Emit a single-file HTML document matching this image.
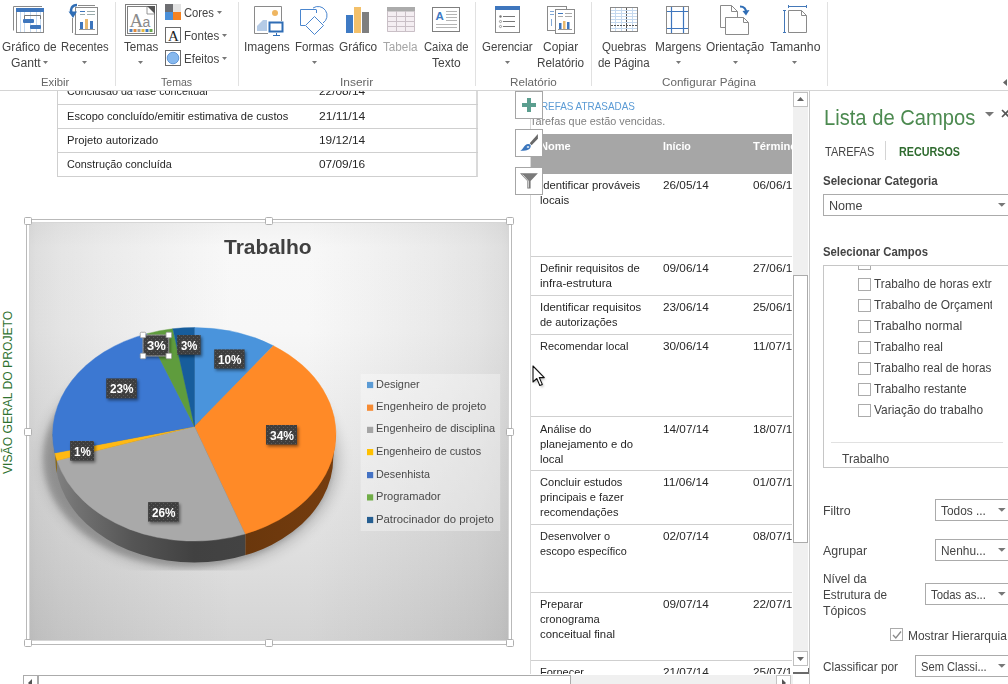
<!DOCTYPE html>
<html lang="pt-BR"><head><meta charset="utf-8"><title>Project - Lista de Campos</title><style>
html,body{margin:0;padding:0;}
body{width:1008px;height:684px;overflow:hidden;background:#fff;position:relative;font-family:"Liberation Sans",sans-serif;color:#444;}
.a{position:absolute;}
.t{position:absolute;white-space:nowrap;transform-origin:0 0;}
svg{position:absolute;overflow:visible;}
.clip{position:absolute;overflow:hidden;}
</style></head><body><div class="a" style="left:57px;top:60px;width:421px;height:117px;border:1px solid #cfcfcf;border-right:2px solid #dadada;box-sizing:border-box"></div><div class="a" style="left:57px;top:104px;width:421px;height:1px;background:#cfcfcf"></div><div class="a" style="left:57px;top:128px;width:421px;height:1px;background:#cfcfcf"></div><div class="a" style="left:57px;top:152px;width:421px;height:1px;background:#cfcfcf"></div><span class="t" style="left:67.40px;top:86.00px;font-size:11px;line-height:11px;color:#262626;transform:scaleX(0.9790);">Conclusão da fase conceitual</span><span class="t" style="left:319.40px;top:86.00px;font-size:11px;line-height:11px;color:#262626;transform:scaleX(1.0787);">22/08/14</span><span class="t" style="left:67.40px;top:111.00px;font-size:11px;line-height:11px;color:#262626;transform:scaleX(1.0077);">Escopo concluído/emitir estimativa de custos</span><span class="t" style="left:319.40px;top:111.00px;font-size:11px;line-height:11px;color:#262626;transform:scaleX(1.0996);">21/11/14</span><span class="t" style="left:67.40px;top:135.00px;font-size:11px;line-height:11px;color:#262626;transform:scaleX(1.0215);">Projeto autorizado</span><span class="t" style="left:319.40px;top:135.00px;font-size:11px;line-height:11px;color:#262626;transform:scaleX(1.0787);">19/12/14</span><span class="t" style="left:67.40px;top:159.00px;font-size:11px;line-height:11px;color:#262626;transform:scaleX(0.9840);">Construção concluída</span><span class="t" style="left:319.40px;top:159.00px;font-size:11px;line-height:11px;color:#262626;transform:scaleX(1.0787);">07/09/16</span><div class="a" style="left:0;top:311px;width:18px;height:163px;"><span class="t" style="left:2.3px;top:162.6px;font-size:12px;line-height:12px;color:#2f7230;transform:rotate(-90deg) scaleX(1.0113);transform-origin:0 0">VISÃO GERAL DO PROJETO</span></div><div class="a" style="left:23px;top:675px;width:770px;height:12px;background:#f0f0f0"></div><div class="a" style="left:23px;top:675px;width:15px;height:12px;background:#fff;border:1px solid #ababab;box-sizing:border-box"></div><div class="a" style="left:38px;top:675px;width:533px;height:12px;background:#fff;border:1px solid #ababab;box-sizing:border-box"></div><div class="a" style="left:776px;top:675px;width:15px;height:12px;background:#fff;border:1px solid #c4c4c4;box-sizing:border-box"></div><svg style="left:28px;top:679px" width="4" height="8" viewBox="0 0 4 8"><path d="M4 0L0 4L4 8Z" fill="#555"/></svg><svg style="left:782px;top:679px" width="4" height="8" viewBox="0 0 4 8"><path d="M0 0L4 4L0 8Z" fill="#555"/></svg><div class="a" style="left:26px;top:219px;width:486px;height:426px;border:1px solid #b9b9b9;box-sizing:border-box;background:#fff"></div><div class="a" style="left:29px;top:222px;width:480px;height:419px;border:1px solid #d6d6d6;box-sizing:border-box;background-origin:border-box;background-color:#f8f8f8;background-image:linear-gradient(90deg,#e0e0e0 0%,#e5e5e5 1.500%,#ebebeb 6.500%,#f1f1f1 15%,#f8f8f8 28%,#ffffff 42%,#ffffff 58%,#f8f8f8 72%,#f1f1f1 85%,#ebebeb 93.500%,#e5e5e5 98.500%,#e0e0e0 100%),linear-gradient(180deg,#f8f8f8 0%,#ffffff 6%,#fefefe 26%,#f1f1f1 54%,#e3e3e3 83%,#dadada 100%);background-blend-mode:multiply,multiply"></div><svg style="left:0;top:0" width="530" height="650" viewBox="0 0 530 650"><defs><filter id="bl" x="-20%" y="-20%" width="140%" height="140%"><feGaussianBlur stdDeviation="7"/></filter><filter id="bl2" x="-20%" y="-20%" width="140%" height="140%"><feGaussianBlur stdDeviation="2.500"/></filter><filter id="ls" x="-30%" y="-30%" width="170%" height="180%"><feGaussianBlur stdDeviation="1.6"/></filter><clipPath id="plot"><rect x="29" y="223" width="480" height="347.500"/></clipPath><clipPath id="wall"><ellipse cx="194.3" cy="457.6" rx="139" ry="105"/><path d="M52.6 434.3H336L333.3 457.6H55.3Z"/></clipPath><linearGradient id="gw" x1="0" x2="1" y1="0" y2="0"><stop offset="0" stop-color="#8c8c8c"/><stop offset="0.180" stop-color="#727272"/><stop offset="0.450" stop-color="#555"/><stop offset="0.750" stop-color="#414141"/><stop offset="1" stop-color="#434343"/></linearGradient><linearGradient id="ow" x1="0" x2="1" y1="0" y2="0"><stop offset="0" stop-color="#6a370c"/><stop offset="1" stop-color="#763d0f"/></linearGradient><pattern id="dots" width="4" height="4" patternUnits="userSpaceOnUse"><rect width="4" height="4" fill="#3e3e3e"/><rect x="1" y="1" width="1" height="1" fill="#5c5c5c"/><rect x="3" y="3" width="1" height="1" fill="#5c5c5c"/></pattern></defs><g clip-path="url(#plot)"><ellipse cx="191" cy="459" rx="148" ry="110" fill="#000" opacity="0.200" filter="url(#bl)"/><ellipse cx="188" cy="458" rx="145" ry="109" fill="#000" opacity="0.160" filter="url(#bl2)"/></g><g clip-path="url(#wall)"><rect x="40" y="420" width="205.400" height="160" fill="url(#gw)"/><rect x="245.400" y="420" width="100" height="160" fill="url(#ow)"/><rect x="40" y="420" width="17" height="160" fill="#8a6a1a"/></g><path d="M194.5 426.5L194.50 327.50A141.7 106.8 0 0 1 273.44 345.71Z" fill="#4a94dc" stroke="#4a94dc" stroke-width="0.400"/><path d="M194.5 426.5L273.44 345.71A141.7 106.8 0 0 1 245.05 534.01Z" fill="#ff8a27" stroke="#ff8a27" stroke-width="0.400"/><path d="M194.5 426.5L245.05 534.01A141.7 106.8 0 0 1 56.97 460.61Z" fill="#a9a9a9" stroke="#a9a9a9" stroke-width="0.400"/><path d="M194.5 426.5L56.97 460.61A141.7 106.8 0 0 1 54.79 453.00Z" fill="#ffb914" stroke="#ffb914" stroke-width="0.400"/><path d="M194.5 426.5L54.79 453.00A141.7 106.8 0 0 1 146.99 333.63Z" fill="#3c78d2" stroke="#3c78d2" stroke-width="0.400"/><path d="M194.5 426.5L146.99 333.63A141.7 106.8 0 0 1 172.77 328.74Z" fill="#5f9c3d" stroke="#5f9c3d" stroke-width="0.400"/><path d="M194.5 426.5L172.77 328.74A141.7 106.8 0 0 1 194.50 327.50Z" fill="#175d9c" stroke="#175d9c" stroke-width="0.400"/><rect x="144.5" y="337" width="25.8" height="21" fill="#000" opacity="0.450" filter="url(#ls)"/><rect x="143" y="335" width="25.8" height="21" fill="url(#dots)" stroke="#9a9a9a" stroke-width="1"/><rect x="178.7" y="337" width="23.4" height="19.7" fill="#000" opacity="0.450" filter="url(#ls)"/><rect x="177.2" y="335" width="23.4" height="19.7" fill="url(#dots)"/><rect x="215.7" y="351.4" width="30.4" height="19.2" fill="#000" opacity="0.450" filter="url(#ls)"/><rect x="214.2" y="349.4" width="30.4" height="19.2" fill="url(#dots)"/><rect x="107.7" y="380.4" width="30.6" height="20" fill="#000" opacity="0.450" filter="url(#ls)"/><rect x="106.2" y="378.4" width="30.6" height="20" fill="url(#dots)"/><rect x="267.5" y="427" width="31" height="19.6" fill="#000" opacity="0.450" filter="url(#ls)"/><rect x="266" y="425" width="31" height="19.6" fill="url(#dots)"/><rect x="71.6" y="443" width="23.9" height="19.6" fill="#000" opacity="0.450" filter="url(#ls)"/><rect x="70.1" y="441" width="23.9" height="19.6" fill="url(#dots)"/><rect x="149.6" y="504.1" width="30.6" height="19.5" fill="#000" opacity="0.450" filter="url(#ls)"/><rect x="148.1" y="502.1" width="30.6" height="19.5" fill="url(#dots)"/><rect x="140.25" y="332.25" width="5.500" height="5.500" rx="1" fill="#fff" stroke="#9a9a9a" stroke-width="0.800"/><rect x="166.05" y="332.25" width="5.500" height="5.500" rx="1" fill="#fff" stroke="#9a9a9a" stroke-width="0.800"/><rect x="140.25" y="353.25" width="5.500" height="5.500" rx="1" fill="#fff" stroke="#9a9a9a" stroke-width="0.800"/><rect x="166.05" y="353.25" width="5.500" height="5.500" rx="1" fill="#fff" stroke="#9a9a9a" stroke-width="0.800"/><rect x="360.600" y="374" width="139.600" height="157" fill="#fff" opacity="0.330"/><rect x="367" y="381.9" width="6.200" height="6.200" fill="#5b9bd5"/><rect x="367" y="404.6" width="6.200" height="6.200" fill="#f68b33"/><rect x="367" y="426.8" width="6.200" height="6.200" fill="#a5a5a5"/><rect x="367" y="449" width="6.200" height="6.200" fill="#ffc000"/><rect x="367" y="472" width="6.200" height="6.200" fill="#4472c4"/><rect x="367" y="494.3" width="6.200" height="6.200" fill="#70ad47"/><rect x="367" y="516.9" width="6.200" height="6.200" fill="#255e91"/></svg><span class="t" style="left:147.00px;top:340.00px;font-size:12px;line-height:12px;color:#fff;font-weight:bold;transform:scaleX(1.0840);">3%</span><span class="t" style="left:180.70px;top:340.00px;font-size:12px;line-height:12px;color:#fff;font-weight:bold;transform:scaleX(0.9456);">3%</span><span class="t" style="left:217.70px;top:354.00px;font-size:12px;line-height:12px;color:#fff;font-weight:bold;transform:scaleX(0.9737);">10%</span><span class="t" style="left:109.70px;top:383.00px;font-size:12px;line-height:12px;color:#fff;font-weight:bold;transform:scaleX(0.9821);">23%</span><span class="t" style="left:269.50px;top:430.00px;font-size:12px;line-height:12px;color:#fff;font-weight:bold;transform:scaleX(0.9987);">34%</span><span class="t" style="left:73.60px;top:446.00px;font-size:12px;line-height:12px;color:#fff;font-weight:bold;transform:scaleX(0.9744);">1%</span><span class="t" style="left:151.60px;top:507.00px;font-size:12px;line-height:12px;color:#fff;font-weight:bold;transform:scaleX(0.9821);">26%</span><span class="t" style="left:224.40px;top:237.00px;font-size:20px;line-height:20px;color:#404040;font-weight:bold;transform:scaleX(1.0509);">Trabalho</span><span class="t" style="left:375.90px;top:379.00px;font-size:11px;line-height:11px;color:#4a4a4a;transform:scaleX(0.9925);">Designer</span><span class="t" style="left:375.90px;top:401.00px;font-size:11px;line-height:11px;color:#4a4a4a;transform:scaleX(1.0189);">Engenheiro de projeto</span><span class="t" style="left:375.90px;top:423.00px;font-size:11px;line-height:11px;color:#4a4a4a;transform:scaleX(0.9944);">Engenheiro de disciplina</span><span class="t" style="left:375.90px;top:446.00px;font-size:11px;line-height:11px;color:#4a4a4a;transform:scaleX(0.9876);">Engenheiro de custos</span><span class="t" style="left:375.90px;top:469.00px;font-size:11px;line-height:11px;color:#4a4a4a;transform:scaleX(0.9792);">Desenhista</span><span class="t" style="left:375.90px;top:491.00px;font-size:11px;line-height:11px;color:#4a4a4a;transform:scaleX(1.0077);">Programador</span><span class="t" style="left:375.90px;top:514.00px;font-size:11px;line-height:11px;color:#4a4a4a;transform:scaleX(1.0310);">Patrocinador do projeto</span><div class="a" style="left:24px;top:217px;width:8px;height:8px;background:#fff;border:1px solid #b0b0b0;border-radius:1.500px;box-sizing:border-box"></div><div class="a" style="left:265px;top:217px;width:8px;height:8px;background:#fff;border:1px solid #b0b0b0;border-radius:1.500px;box-sizing:border-box"></div><div class="a" style="left:506px;top:217px;width:8px;height:8px;background:#fff;border:1px solid #b0b0b0;border-radius:1.500px;box-sizing:border-box"></div><div class="a" style="left:24px;top:428px;width:8px;height:8px;background:#fff;border:1px solid #b0b0b0;border-radius:1.500px;box-sizing:border-box"></div><div class="a" style="left:506px;top:428px;width:8px;height:8px;background:#fff;border:1px solid #b0b0b0;border-radius:1.500px;box-sizing:border-box"></div><div class="a" style="left:24px;top:639px;width:8px;height:8px;background:#fff;border:1px solid #b0b0b0;border-radius:1.500px;box-sizing:border-box"></div><div class="a" style="left:265px;top:639px;width:8px;height:8px;background:#fff;border:1px solid #b0b0b0;border-radius:1.500px;box-sizing:border-box"></div><div class="a" style="left:506px;top:639px;width:8px;height:8px;background:#fff;border:1px solid #b0b0b0;border-radius:1.500px;box-sizing:border-box"></div><div class="clip" style="left:531px;top:91px;width:260.500px;height:583px;"><div class="a" style="left:0;top:43px;width:300px;height:40px;background:#a6a6a6"></div><span class="t" style="left:-1.90px;top:10.00px;font-size:11.5px;line-height:11.5px;color:#5b9bd5;transform:scaleX(0.8615);">TAREFAS ATRASADAS</span><span class="t" style="left:-0.80px;top:25.00px;font-size:11.5px;line-height:11.5px;color:#7f7f7f;transform:scaleX(0.9441);">Tarefas que estão vencidas.</span><span class="t" style="left:9.00px;top:50.00px;font-size:11.5px;line-height:11.5px;color:#fff;font-weight:bold;transform:scaleX(0.9608);">Nome</span><span class="t" style="left:131.70px;top:50.00px;font-size:11.5px;line-height:11.5px;color:#fff;font-weight:bold;transform:scaleX(0.9290);">Início</span><span class="t" style="left:221.90px;top:50.00px;font-size:11.5px;line-height:11.5px;color:#fff;font-weight:bold;transform:scaleX(0.9741);">Término</span><span class="t" style="left:8.90px;top:89.00px;font-size:11px;line-height:11px;color:#262626;transform:scaleX(1.0242);">Identificar prováveis</span><span class="t" style="left:8.90px;top:104.00px;font-size:11px;line-height:11px;color:#262626;transform:scaleX(1.0382);">locais</span><span class="t" style="left:131.80px;top:89.00px;font-size:11px;line-height:11px;color:#262626;transform:scaleX(1.0694);">26/05/14</span><span class="t" style="left:222.00px;top:89.00px;font-size:11px;line-height:11px;color:#262626;transform:scaleX(1.0694);">06/06/14</span><div class="a" style="left:0;top:165px;width:300px;height:1px;background:#cfcfcf"></div><span class="t" style="left:8.90px;top:172.00px;font-size:11px;line-height:11px;color:#262626;transform:scaleX(1.0255);">Definir requisitos de</span><span class="t" style="left:8.90px;top:187.00px;font-size:11px;line-height:11px;color:#262626;transform:scaleX(1.0513);">infra-estrutura</span><span class="t" style="left:131.80px;top:172.00px;font-size:11px;line-height:11px;color:#262626;transform:scaleX(1.0694);">09/06/14</span><span class="t" style="left:222.00px;top:172.00px;font-size:11px;line-height:11px;color:#262626;transform:scaleX(1.0694);">27/06/14</span><div class="a" style="left:0;top:204px;width:300px;height:1px;background:#cfcfcf"></div><span class="t" style="left:8.90px;top:211.00px;font-size:11px;line-height:11px;color:#262626;transform:scaleX(1.0345);">Identificar requisitos</span><span class="t" style="left:8.90px;top:226.00px;font-size:11px;line-height:11px;color:#262626;transform:scaleX(0.9965);">de autorizações</span><span class="t" style="left:131.80px;top:211.00px;font-size:11px;line-height:11px;color:#262626;transform:scaleX(1.0694);">23/06/14</span><span class="t" style="left:222.00px;top:211.00px;font-size:11px;line-height:11px;color:#262626;transform:scaleX(1.0694);">25/06/14</span><div class="a" style="left:0;top:243px;width:300px;height:1px;background:#cfcfcf"></div><span class="t" style="left:8.90px;top:250.00px;font-size:11px;line-height:11px;color:#262626;transform:scaleX(0.9971);">Recomendar local</span><span class="t" style="left:131.80px;top:250.00px;font-size:11px;line-height:11px;color:#262626;transform:scaleX(1.0694);">30/06/14</span><span class="t" style="left:222.00px;top:250.00px;font-size:11px;line-height:11px;color:#262626;transform:scaleX(1.0901);">11/07/14</span><div class="a" style="left:0;top:325px;width:300px;height:1px;background:#cfcfcf"></div><span class="t" style="left:8.90px;top:333.00px;font-size:11px;line-height:11px;color:#262626;transform:scaleX(1.0005);">Análise do</span><span class="t" style="left:8.90px;top:348.00px;font-size:11px;line-height:11px;color:#262626;transform:scaleX(1.0274);">planejamento e do</span><span class="t" style="left:8.90px;top:363.00px;font-size:11px;line-height:11px;color:#262626;transform:scaleX(1.0343);">local</span><span class="t" style="left:131.80px;top:333.00px;font-size:11px;line-height:11px;color:#262626;transform:scaleX(1.0694);">14/07/14</span><span class="t" style="left:222.00px;top:333.00px;font-size:11px;line-height:11px;color:#262626;transform:scaleX(1.0694);">18/07/14</span><div class="a" style="left:0;top:379px;width:300px;height:1px;background:#cfcfcf"></div><span class="t" style="left:8.90px;top:386.00px;font-size:11px;line-height:11px;color:#262626;transform:scaleX(1.0056);">Concluir estudos</span><span class="t" style="left:8.90px;top:401.00px;font-size:11px;line-height:11px;color:#262626;transform:scaleX(1.0065);">principais e fazer</span><span class="t" style="left:8.90px;top:416.00px;font-size:11px;line-height:11px;color:#262626;transform:scaleX(1.0015);">recomendações</span><span class="t" style="left:131.80px;top:386.00px;font-size:11px;line-height:11px;color:#262626;transform:scaleX(1.0901);">11/06/14</span><span class="t" style="left:222.00px;top:386.00px;font-size:11px;line-height:11px;color:#262626;transform:scaleX(1.0694);">01/07/14</span><div class="a" style="left:0;top:433px;width:300px;height:1px;background:#cfcfcf"></div><span class="t" style="left:8.90px;top:440.00px;font-size:11px;line-height:11px;color:#262626;transform:scaleX(0.9953);">Desenvolver o</span><span class="t" style="left:8.90px;top:455.00px;font-size:11px;line-height:11px;color:#262626;transform:scaleX(0.9845);">escopo específico</span><span class="t" style="left:131.80px;top:440.00px;font-size:11px;line-height:11px;color:#262626;transform:scaleX(1.0694);">02/07/14</span><span class="t" style="left:222.00px;top:440.00px;font-size:11px;line-height:11px;color:#262626;transform:scaleX(1.0694);">08/07/14</span><div class="a" style="left:0;top:501px;width:300px;height:1px;background:#cfcfcf"></div><span class="t" style="left:8.90px;top:508.00px;font-size:11px;line-height:11px;color:#262626;transform:scaleX(1.0047);">Preparar</span><span class="t" style="left:8.90px;top:523.00px;font-size:11px;line-height:11px;color:#262626;transform:scaleX(1.0170);">cronograma</span><span class="t" style="left:8.90px;top:538.00px;font-size:11px;line-height:11px;color:#262626;transform:scaleX(1.0305);">conceitual final</span><span class="t" style="left:131.80px;top:508.00px;font-size:11px;line-height:11px;color:#262626;transform:scaleX(1.0694);">09/07/14</span><span class="t" style="left:222.00px;top:508.00px;font-size:11px;line-height:11px;color:#262626;transform:scaleX(1.0694);">22/07/14</span><div class="a" style="left:0;top:569px;width:300px;height:1px;background:#cfcfcf"></div><span class="t" style="left:8.90px;top:576.00px;font-size:11px;line-height:11px;color:#262626;transform:scaleX(0.9993);">Fornecer</span><span class="t" style="left:131.80px;top:576.00px;font-size:11px;line-height:11px;color:#262626;transform:scaleX(1.0694);">21/07/14</span><span class="t" style="left:222.00px;top:576.00px;font-size:11px;line-height:11px;color:#262626;transform:scaleX(1.0694);">25/07/14</span></div><div class="a" style="left:530px;top:91px;width:1px;height:583px;background:#d9d9d9"></div><div class="a" style="left:793px;top:91px;width:15px;height:575px;background:#f0f0f0"></div><div class="a" style="left:793px;top:92px;width:15px;height:15px;background:#fff;border:1px solid #c0c0c0;box-sizing:border-box"></div><svg style="left:797px;top:97px" width="7" height="4" viewBox="0 0 7 4"><path d="M0 4L3.500 0L7 4Z" fill="#666"/></svg><div class="a" style="left:793px;top:275px;width:15px;height:268px;background:#fff;border:1px solid #ababab;box-sizing:border-box"></div><div class="a" style="left:793px;top:651px;width:15px;height:15px;background:#fff;border:1px solid #c0c0c0;box-sizing:border-box"></div><svg style="left:797px;top:657px" width="7" height="4" viewBox="0 0 7 4"><path d="M0 0L3.500 4L7 0Z" fill="#666"/></svg><div class="a" style="left:515px;top:91px;width:28px;height:28px;background:#fff;border:1px solid #a6a6a6;box-sizing:border-box"></div><div class="a" style="left:515px;top:129px;width:28px;height:28px;background:#fff;border:1px solid #a6a6a6;box-sizing:border-box"></div><div class="a" style="left:515px;top:167px;width:28px;height:28px;background:#fff;border:1px solid #a6a6a6;box-sizing:border-box"></div><svg style="left:510px;top:88px" width="40" height="112" viewBox="510 88 40 112"><path d="M522 103H536V107H522ZM527 98H531V112H527Z" fill="#5b9e8f"/><path d="M537.900 134.100L537.900 138.800L531.600 145.300L529.700 143.300Z" fill="#686868"/><path d="M530.200 144.600C532 147.500 529 150.300 525.500 150.400C523.500 150.500 521.800 150.900 520.300 150.700C523 149 523.500 146.800 525.300 145.200C526.800 143.800 529 143.600 530.200 144.600Z" fill="#3b76bd"/><ellipse cx="528" cy="146.900" rx="1.300" ry="1" fill="#fff" opacity="0.750"/><path d="M520 173.200H537.900L530.600 181V188.500H527.300V181Z" fill="#7a7a7a"/><path d="M522.600 174.600L528.400 181V187.600" stroke="#fff" stroke-width="0.700" fill="none"/></svg><svg style="left:532px;top:365px" width="14" height="22" viewBox="0 0 14 22"><path d="M1 1V17L4.800 13.500L7.800 20.500L10.300 19.400L7.300 12.600H12.300Z" transform="translate(1.500,2)" fill="#000" opacity="0.250" filter="url(#cs)"/><defs><filter id="cs" x="-30%" y="-30%" width="160%" height="160%"><feGaussianBlur stdDeviation="1"/></filter></defs><path d="M1 1V17L4.800 13.500L7.800 20.500L10.300 19.400L7.300 12.600H12.300Z" fill="#fff" stroke="#111" stroke-width="1.100" stroke-linejoin="round"/></svg><div class="a" style="left:808px;top:91px;width:200px;height:593px;background:#fff"></div><div class="a" style="left:809px;top:91px;width:1px;height:593px;background:#c8c8c8"></div><span class="t" style="left:823.70px;top:108.00px;font-size:21.5px;line-height:21.5px;color:#4c8a50;transform:scaleX(0.9377);">Lista de Campos</span><svg style="left:985.1px;top:112.3px" width="9" height="4.6" viewBox="0 0 9 4.6"><path d="M0 0H9L4.5 4.6Z" fill="#777"/></svg><svg style="left:1001px;top:109px" width="9" height="9" viewBox="0 0 9 9"><path d="M1 1L8 8M8 1L1 8" stroke="#555" stroke-width="1.600"/></svg><span class="t" style="left:824.60px;top:146.00px;font-size:12.4px;line-height:12.4px;color:#444;transform:scaleX(0.8875);">TAREFAS</span><div class="a" style="left:885px;top:141px;width:1px;height:19px;background:#d4d4d4"></div><span class="t" style="left:899.10px;top:146.00px;font-size:12.4px;line-height:12.4px;color:#2f6b2f;font-weight:bold;transform:scaleX(0.8685);">RECURSOS</span><span class="t" style="left:822.50px;top:175.00px;font-size:12.4px;line-height:12.4px;color:#444;font-weight:bold;transform:scaleX(0.9305);">Selecionar Categoria</span><div class="a" style="left:823px;top:194px;width:197px;height:22px;border:1px solid #ababab;box-sizing:border-box;background:#fff"></div><svg style="left:997.7px;top:203.3px" width="7.6" height="3.8" viewBox="0 0 7.6 3.8"><path d="M0 0H7.6L3.8 3.8Z" fill="#777"/></svg><span class="t" style="left:828.90px;top:200.00px;font-size:12.4px;line-height:12.4px;color:#444;transform:scaleX(1.0163);">Nome</span><span class="t" style="left:822.50px;top:246.00px;font-size:12.4px;line-height:12.4px;color:#444;font-weight:bold;transform:scaleX(0.9129);">Selecionar Campos</span><div class="a" style="left:823px;top:265px;width:200px;height:203px;border:1px solid #c6c6c6;box-sizing:border-box;background:#fff"></div><div class="clip" style="left:824px;top:266px;width:168px;height:201px"><div class="a" style="left:34px;top:-9px;width:13px;height:13px;border:1px solid #ababab;box-sizing:border-box;background:#fff"></div><div class="a" style="left:34px;top:12px;width:13px;height:13px;border:1px solid #ababab;box-sizing:border-box;background:#fff"></div><span class="t" style="left:50.10px;top:12.00px;font-size:12.4px;line-height:12.4px;color:#444;transform:scaleX(0.9469);">Trabalho de horas extras</span><div class="a" style="left:34px;top:33px;width:13px;height:13px;border:1px solid #ababab;box-sizing:border-box;background:#fff"></div><span class="t" style="left:50.10px;top:33.00px;font-size:12.4px;line-height:12.4px;color:#444;transform:scaleX(0.9647);">Trabalho de Orçamento</span><div class="a" style="left:34px;top:54px;width:13px;height:13px;border:1px solid #ababab;box-sizing:border-box;background:#fff"></div><span class="t" style="left:50.10px;top:54.00px;font-size:12.4px;line-height:12.4px;color:#444;transform:scaleX(0.9814);">Trabalho normal</span><div class="a" style="left:34px;top:75px;width:13px;height:13px;border:1px solid #ababab;box-sizing:border-box;background:#fff"></div><span class="t" style="left:50.10px;top:75.00px;font-size:12.4px;line-height:12.4px;color:#444;transform:scaleX(0.9497);">Trabalho real</span><div class="a" style="left:34px;top:96px;width:13px;height:13px;border:1px solid #ababab;box-sizing:border-box;background:#fff"></div><span class="t" style="left:50.10px;top:96.00px;font-size:12.4px;line-height:12.4px;color:#444;transform:scaleX(0.9451);">Trabalho real de horas</span><div class="a" style="left:34px;top:117px;width:13px;height:13px;border:1px solid #ababab;box-sizing:border-box;background:#fff"></div><span class="t" style="left:50.10px;top:117.00px;font-size:12.4px;line-height:12.4px;color:#444;transform:scaleX(0.9579);">Trabalho restante</span><div class="a" style="left:34px;top:138px;width:13px;height:13px;border:1px solid #ababab;box-sizing:border-box;background:#fff"></div><span class="t" style="left:50.10px;top:138.00px;font-size:12.4px;line-height:12.4px;color:#444;transform:scaleX(0.9618);">Variação do trabalho</span></div><div class="a" style="left:831px;top:442px;width:172px;height:1px;background:#e1e1e1"></div><span class="t" style="left:842.10px;top:453.00px;font-size:12.4px;line-height:12.4px;color:#444;transform:scaleX(0.9741);">Trabalho</span><span class="t" style="left:822.50px;top:505.00px;font-size:12.4px;line-height:12.4px;color:#444;transform:scaleX(1.0019);">Filtro</span><div class="a" style="left:935px;top:499px;width:85px;height:22px;border:1px solid #ababab;box-sizing:border-box;background:#fff"></div><svg style="left:997.7px;top:508.3px" width="7.6" height="3.8" viewBox="0 0 7.6 3.8"><path d="M0 0H7.6L3.8 3.8Z" fill="#777"/></svg><span class="t" style="left:940.80px;top:505.00px;font-size:12.4px;line-height:12.4px;color:#444;transform:scaleX(0.9585);">Todos ...</span><span class="t" style="left:822.50px;top:545.00px;font-size:12.4px;line-height:12.4px;color:#444;transform:scaleX(1.0001);">Agrupar</span><div class="a" style="left:935px;top:539px;width:85px;height:22px;border:1px solid #ababab;box-sizing:border-box;background:#fff"></div><svg style="left:997.7px;top:548.3px" width="7.6" height="3.8" viewBox="0 0 7.6 3.8"><path d="M0 0H7.6L3.8 3.8Z" fill="#777"/></svg><span class="t" style="left:940.80px;top:545.00px;font-size:12.4px;line-height:12.4px;color:#444;transform:scaleX(0.9585);">Nenhu...</span><span class="t" style="left:822.50px;top:573.00px;font-size:12.4px;line-height:12.4px;color:#444;transform:scaleX(0.9611);">Nível da</span><span class="t" style="left:822.50px;top:589.00px;font-size:12.4px;line-height:12.4px;color:#444;transform:scaleX(0.9496);">Estrutura de</span><span class="t" style="left:822.50px;top:605.00px;font-size:12.4px;line-height:12.4px;color:#444;transform:scaleX(0.9933);">Tópicos</span><div class="a" style="left:925px;top:583px;width:95px;height:22px;border:1px solid #ababab;box-sizing:border-box;background:#fff"></div><svg style="left:997.7px;top:592.3px" width="7.6" height="3.8" viewBox="0 0 7.6 3.8"><path d="M0 0H7.6L3.8 3.8Z" fill="#777"/></svg><span class="t" style="left:930.80px;top:589.00px;font-size:12.4px;line-height:12.4px;color:#444;transform:scaleX(0.9162);">Todas as...</span><div class="a" style="left:890px;top:628px;width:13px;height:13px;border:1px solid #ababab;box-sizing:border-box;background:#fff"></div><svg style="left:890px;top:628px" width="14" height="14" viewBox="0 0 14 14"><path d="M3 7L5.800 10L11 3.500" fill="none" stroke="#8a8a8a" stroke-width="1.300"/></svg><span class="t" style="left:907.90px;top:630.00px;font-size:12.4px;line-height:12.4px;color:#444;transform:scaleX(0.9638);">Mostrar Hierarquia</span><span class="t" style="left:822.80px;top:661.00px;font-size:12.4px;line-height:12.4px;color:#444;transform:scaleX(0.9554);">Classificar por</span><div class="a" style="left:915px;top:655px;width:105px;height:22px;border:1px solid #ababab;box-sizing:border-box;background:#fff"></div><svg style="left:997.7px;top:664.3px" width="7.6" height="3.8" viewBox="0 0 7.6 3.8"><path d="M0 0H7.6L3.8 3.8Z" fill="#777"/></svg><span class="t" style="left:920.80px;top:661.00px;font-size:12.4px;line-height:12.4px;color:#444;transform:scaleX(0.9002);">Sem Classi...</span><div class="a" style="left:792.500px;top:672px;width:16.500px;height:1.700px;background:#6a6a6a"></div><div class="a" style="left:807.500px;top:668px;width:1.500px;height:5.700px;background:#6a6a6a"></div><div class="a" style="left:0;top:0;width:1008px;height:90px;background:#fff"></div><div class="a" style="left:0;top:90px;width:1008px;height:1px;background:#d4d4d4"></div><div class="a" style="left:115px;top:2px;width:1px;height:84px;background:#e1e1e1"></div><div class="a" style="left:238px;top:2px;width:1px;height:84px;background:#e1e1e1"></div><div class="a" style="left:475px;top:2px;width:1px;height:84px;background:#e1e1e1"></div><div class="a" style="left:591px;top:2px;width:1px;height:84px;background:#e1e1e1"></div><div class="a" style="left:827px;top:2px;width:1px;height:84px;background:#e1e1e1"></div><span class="t" style="left:41.10px;top:77.00px;font-size:11px;line-height:11px;color:#666;transform:scaleX(1.0249);">Exibir</span><span class="t" style="left:160.80px;top:77.00px;font-size:11px;line-height:11px;color:#666;transform:scaleX(0.9597);">Temas</span><span class="t" style="left:340.40px;top:77.00px;font-size:11px;line-height:11px;color:#666;transform:scaleX(1.0863);">Inserir</span><span class="t" style="left:510.00px;top:77.00px;font-size:11px;line-height:11px;color:#666;transform:scaleX(1.0629);">Relatório</span><span class="t" style="left:662.20px;top:77.00px;font-size:11px;line-height:11px;color:#666;transform:scaleX(1.0590);">Configurar Página</span><span class="t" style="left:1.90px;top:41.00px;font-size:12px;line-height:12px;color:#444;transform:scaleX(0.9881);">Gráfico de</span><span class="t" style="left:10.90px;top:57.00px;font-size:12px;line-height:12px;color:#444;transform:scaleX(1.0116);">Gantt</span><svg style="left:43px;top:61px" width="5" height="3" viewBox="0 0 5 3"><path d="M0 0H5L2.5 3Z" fill="#777"/></svg><span class="t" style="left:60.70px;top:41.00px;font-size:12px;line-height:12px;color:#444;transform:scaleX(0.9388);">Recentes</span><svg style="left:82px;top:61px" width="5" height="3" viewBox="0 0 5 3"><path d="M0 0H5L2.5 3Z" fill="#777"/></svg><span class="t" style="left:124.00px;top:41.00px;font-size:12px;line-height:12px;color:#444;transform:scaleX(0.9676);">Temas</span><svg style="left:138px;top:61px" width="5" height="3" viewBox="0 0 5 3"><path d="M0 0H5L2.5 3Z" fill="#777"/></svg><span class="t" style="left:183.90px;top:7.00px;font-size:12px;line-height:12px;color:#444;transform:scaleX(0.9370);">Cores</span><svg style="left:217.2px;top:11.2px" width="5" height="3" viewBox="0 0 5 3"><path d="M0 0H5L2.5 3Z" fill="#777"/></svg><span class="t" style="left:183.90px;top:30.00px;font-size:12px;line-height:12px;color:#444;transform:scaleX(0.9622);">Fontes</span><svg style="left:222px;top:34px" width="5" height="3" viewBox="0 0 5 3"><path d="M0 0H5L2.5 3Z" fill="#777"/></svg><span class="t" style="left:183.90px;top:53.00px;font-size:12px;line-height:12px;color:#444;transform:scaleX(0.9622);">Efeitos</span><svg style="left:222px;top:57px" width="5" height="3" viewBox="0 0 5 3"><path d="M0 0H5L2.5 3Z" fill="#777"/></svg><span class="t" style="left:244.30px;top:41.00px;font-size:12px;line-height:12px;color:#444;transform:scaleX(0.9950);">Imagens</span><span class="t" style="left:295.20px;top:41.00px;font-size:12px;line-height:12px;color:#444;transform:scaleX(0.9614);">Formas</span><svg style="left:312.2px;top:61px" width="5" height="3" viewBox="0 0 5 3"><path d="M0 0H5L2.5 3Z" fill="#777"/></svg><span class="t" style="left:339.00px;top:41.00px;font-size:12px;line-height:12px;color:#444;transform:scaleX(0.9874);">Gráfico</span><span class="t" style="left:383.20px;top:41.00px;font-size:12px;line-height:12px;color:#a6a6a6;transform:scaleX(0.9753);">Tabela</span><span class="t" style="left:424.00px;top:41.00px;font-size:12px;line-height:12px;color:#444;transform:scaleX(0.9372);">Caixa de</span><span class="t" style="left:432.20px;top:57.00px;font-size:12px;line-height:12px;color:#444;transform:scaleX(1.0004);">Texto</span><span class="t" style="left:481.90px;top:41.00px;font-size:12px;line-height:12px;color:#444;transform:scaleX(0.9623);">Gerenciar</span><svg style="left:505px;top:61px" width="5" height="3" viewBox="0 0 5 3"><path d="M0 0H5L2.5 3Z" fill="#777"/></svg><span class="t" style="left:542.90px;top:41.00px;font-size:12px;line-height:12px;color:#444;transform:scaleX(0.9955);">Copiar</span><span class="t" style="left:537.00px;top:57.00px;font-size:12px;line-height:12px;color:#444;transform:scaleX(0.9806);">Relatório</span><span class="t" style="left:602.10px;top:41.00px;font-size:12px;line-height:12px;color:#444;transform:scaleX(0.9624);">Quebras</span><span class="t" style="left:598.30px;top:57.00px;font-size:12px;line-height:12px;color:#444;transform:scaleX(0.9547);">de Página</span><span class="t" style="left:655.00px;top:41.00px;font-size:12px;line-height:12px;color:#444;transform:scaleX(0.9896);">Margens</span><svg style="left:676px;top:61px" width="5" height="3" viewBox="0 0 5 3"><path d="M0 0H5L2.5 3Z" fill="#777"/></svg><span class="t" style="left:705.90px;top:41.00px;font-size:12px;line-height:12px;color:#444;transform:scaleX(0.9880);">Orientação</span><svg style="left:733.4px;top:61px" width="5" height="3" viewBox="0 0 5 3"><path d="M0 0H5L2.5 3Z" fill="#777"/></svg><span class="t" style="left:769.60px;top:41.00px;font-size:12px;line-height:12px;color:#444;transform:scaleX(1.0228);">Tamanho</span><svg style="left:792px;top:61px" width="5" height="3" viewBox="0 0 5 3"><path d="M0 0H5L2.5 3Z" fill="#777"/></svg><svg style="left:1002px;top:79px" width="6" height="7" viewBox="0 0 6 7"><path d="M5 0L1 3.5L5 7Z" fill="#666"/></svg><svg style="left:0;top:0" width="1008" height="90" viewBox="0 0 1008 90"><path d="M13.5 30.5V6.5H42" fill="none" stroke="#8a8a8a" stroke-width="1"/><rect x="16.5" y="8.5" width="27" height="24" fill="#fff" stroke="#8a8a8a"/><rect x="16" y="8" width="28" height="4" fill="#3e76bd"/><path d="M20.5 12V32M24.5 12V32M30.5 12V32M36.5 12V32M40.5 12V32" stroke="#c5d9ef" stroke-width="1"/><path d="M24.5 19V15.5H40.5V19" fill="none" stroke="#777" stroke-width="1"/><rect x="23" y="19" width="11" height="4" rx="1" fill="#3e76bd"/><rect x="30" y="25" width="11" height="4" rx="1" fill="#3e76bd"/><path d="M72.5 18V32.5M75 33.5V34.5" stroke="#8a8a8a" fill="none"/><path d="M72.5 20V33" stroke="#8a8a8a" fill="none"/><rect x="75.5" y="7.5" width="22" height="27" fill="#fff" stroke="#8a8a8a"/><path d="M78 5.5H95" stroke="#8a8a8a"/><path d="M80 11.5H85M87 11.5H95M80 14.5H85M87 14.5H95" stroke="#9aa" stroke-width="1"/><path d="M80 11.5H85" stroke="#3e76bd"/><rect x="80" y="22" width="3" height="7" fill="#3e76bd"/><rect x="85" y="19" width="3" height="10" fill="#e9b96e"/><rect x="90" y="21" width="3" height="8" fill="#3e76bd"/><path d="M79 29.5H95" stroke="#999"/><path d="M77 5C72 5 70 9 71.5 13" fill="none" stroke="#2f6db5" stroke-width="2.4"/><path d="M68.5 11.5L73 18L77 11.5Z" fill="#2f6db5"/><rect x="125.5" y="4.5" width="31" height="31" fill="#fff" stroke="#7f7f7f"/><rect x="127.5" y="6.5" width="27" height="27" fill="#fff" stroke="#7f7f7f"/><path d="M147 6H155V14Z" fill="#555"/><path d="M147 7V14H154" fill="#fff" stroke="#7f7f7f" stroke-width="0.8"/><text x="129.5" y="26.5" font-family="Liberation Serif,serif" font-size="19" fill="#8a8a8a">A</text><text x="142.5" y="26.5" font-family="Liberation Sans,sans-serif" font-size="14" fill="#8a8a8a">a</text><rect x="129.5" y="29" width="3" height="3" fill="#4f81bd"/><rect x="133.5" y="29" width="3" height="3" fill="#e08a3c"/><rect x="137.5" y="29" width="3" height="3" fill="#9aa0a6"/><rect x="141.5" y="29" width="3" height="3" fill="#e6b93d"/><rect x="145.5" y="29" width="3" height="3" fill="#3e76bd"/><rect x="149.5" y="29" width="3" height="3" fill="#6aa84f"/><rect x="165" y="4" width="8" height="8" fill="#6d6e71"/><rect x="173" y="4" width="8" height="8" fill="#e3e3e3"/><rect x="165" y="12" width="8" height="8" fill="#4a90d9"/><rect x="173" y="12" width="8" height="8" fill="#f58220"/><rect x="165.5" y="27.5" width="15" height="15" fill="#fff" stroke="#6a6a6a"/><text x="168" y="41" font-family="Liberation Serif,serif" font-size="15" fill="#222">A</text><rect x="165.5" y="50.5" width="15" height="15" fill="#fff" stroke="#6a6a6a"/><circle cx="173" cy="58" r="5.8" fill="#86b8ee" stroke="#4a86cf" stroke-width="0.8"/><path d="M254.500 33.5V6.5H281.5V21" fill="none" stroke="#8a8a8a"/><path d="M254.5 33.5H268" stroke="#8a8a8a"/><circle cx="275" cy="13" r="3" fill="#efb661"/><path d="M257 31V26L263 20H267V31Z" fill="#b5cbe6"/><rect x="269.500" y="22.5" width="13" height="9" fill="#fff" stroke="#2f6db5" stroke-width="2"/><path d="M273 35.5H280M276.5 33V35" stroke="#2f6db5" stroke-width="1"/><path d="M316 9.500H300.500V25.500H305" fill="none" stroke="#4a86cf"/><path d="M316.5 9.5V13" stroke="#4a86cf"/><path d="M313 8A9 9 0 1 1 323 23" fill="none" stroke="#4a86cf"/><path d="M314.500 16.500L323.500 25.500L314.500 34.500L305.500 25.500Z" fill="#fff" stroke="#4a86cf"/><rect x="346" y="15" width="7" height="18" fill="#3e7ac4"/><rect x="354" y="7" width="7" height="26" fill="#f3c06a"/><rect x="362" y="12" width="7" height="21" fill="#7f7f7f"/><rect x="387" y="7" width="28" height="25" fill="#f4eef2"/><rect x="387" y="7" width="28" height="4.500" fill="#ababab"/><path d="M387.500 11V31.500H414.500V11M396.500 11V32M405.500 11V32M387 16.500H415M387 21.500H415M387 26.500H415" fill="none" stroke="#c9bfc6"/><rect x="432.500" y="7.500" width="27" height="24" fill="#fff" stroke="#7f7f7f"/><text x="435.500" y="20" font-family="Liberation Sans,sans-serif" font-weight="bold" font-size="11.500" fill="#3e7ac4">A</text><path d="M446 11.500H457M446 14.500H457M446 17.500H457M446 20.500H457M436 24.500H457M436 27.500H457" stroke="#b5b5b5"/><rect x="495.500" y="6.500" width="24" height="26" fill="#fff" stroke="#8a8a8a"/><rect x="495" y="6" width="25" height="4" fill="#3e76bd"/><circle cx="500.500" cy="16.500" r="1.200" fill="#777"/><circle cx="500.500" cy="21.500" r="1.100" fill="#fff" stroke="#777" stroke-width="0.700"/><circle cx="500.500" cy="26.500" r="1.100" fill="#fff" stroke="#777" stroke-width="0.700"/><path d="M503 16.500H515M503 21.500H515M503 26.500H515" stroke="#777"/><rect x="547.500" y="6.500" width="19" height="24" fill="#fff" stroke="#8a8a8a"/><path d="M550 11.500H554M550 14.500H554" stroke="#7fa7d6"/><path d="M551.500 19V26" stroke="#7fa7d6"/><rect x="555.500" y="9.500" width="19" height="24" fill="#fff" stroke="#8a8a8a"/><path d="M558 13.500H563M565 13.500H572M558 16.500H563M565 16.500H572" stroke="#aaa"/><path d="M558 13.500H563" stroke="#3e76bd"/><rect x="559" y="23" width="2.500" height="6" fill="#3e76bd"/><rect x="563" y="21" width="2.500" height="8" fill="#e9b96e"/><rect x="567" y="22" width="2.500" height="7" fill="#3e76bd"/><path d="M558 29.500H572" stroke="#999"/><rect x="610.500" y="7.500" width="27" height="24" fill="#fff" stroke="#8a8a8a"/><path d="M611 10.500H637M611 13.500H637M611 16.500H637M611 19.500H637M611 22.500H637M611 28.500H637M615.500 8V31M621.500 8V31M632.500 8V31" stroke="#c5d9ef"/><path d="M626.500 8V31M611 25.500H637" stroke="#555" stroke-dasharray="2 1"/><rect x="666.500" y="6.500" width="22" height="27" fill="#fff" stroke="#8a8a8a"/><path d="M671.500 7V33M683.500 7V33M667 11.500H688M667 28.500H688" stroke="#3e76bd" stroke-width="1.200"/><path d="M733 27.500H720.500V5.500H731.500L737.500 11.500V17" fill="#fff" stroke="#8a8a8a"/><path d="M731.500 5.500V11.500H737.500" fill="none" stroke="#8a8a8a"/><path d="M725.500 17.500H743.500L748.500 22.500V34.500H725.500Z" fill="#fff" stroke="#8a8a8a"/><path d="M743.500 17.500V22.500H748.500" fill="none" stroke="#8a8a8a"/><path d="M740 6.500C744 6.500 746.500 9 746 13" fill="none" stroke="#2f6db5" stroke-width="2"/><path d="M742.500 11L746 15.500L749.500 10Z" fill="#2f6db5"/><path d="M788.500 10.500H801.500L806.500 15.500V32.500H788.500Z" fill="#fff" stroke="#8a8a8a"/><path d="M801.500 10.500V15.500H806.500" fill="none" stroke="#8a8a8a"/><path d="M788 6.500H807M788.500 5V8M806.500 5V8M784.500 10V33M783 10.500H786M783 32.500H786" stroke="#4478b8" fill="none"/></svg></body></html>
